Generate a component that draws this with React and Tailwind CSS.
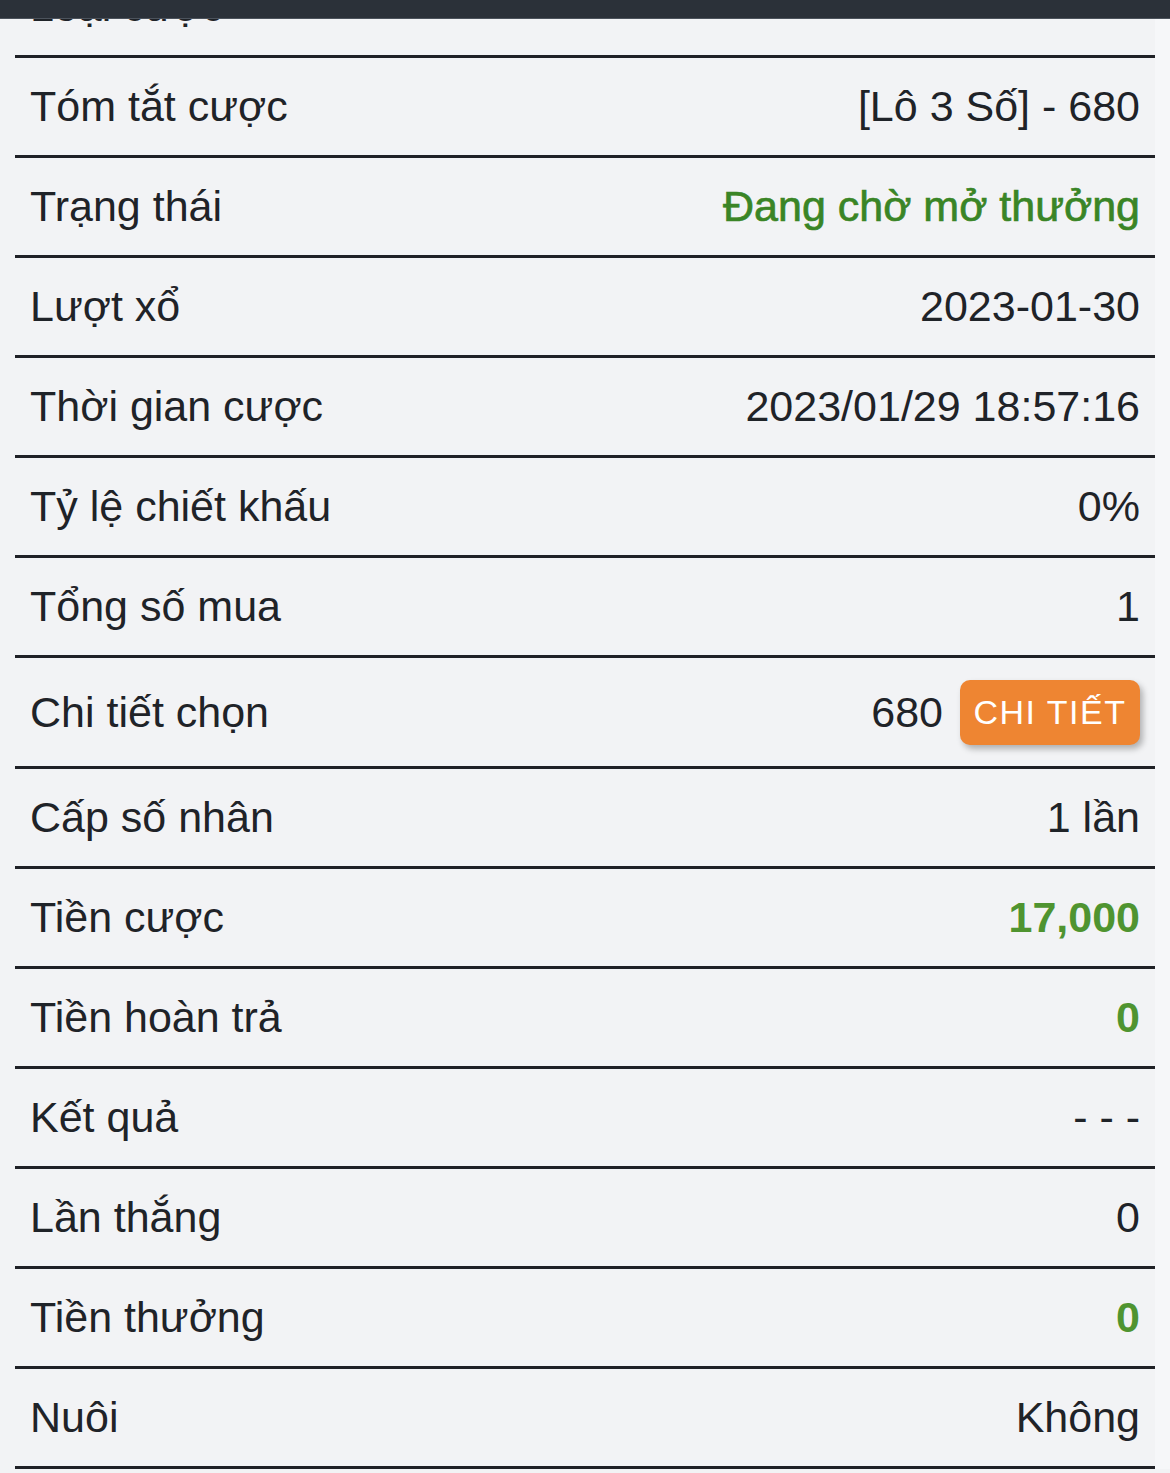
import React from 'react'

// Chi tiết cược - danh sách thông tin
const rows = [
  { label: 'Loại cược', value: '' },
  { label: 'Tóm tắt cược', value: '[Lô 3 Số] - 680' },
  { label: 'Trạng thái', value: 'Đang chờ mở thưởng', tone: 'status' },
  { label: 'Lượt xổ', value: '2023-01-30' },
  { label: 'Thời gian cược', value: '2023/01/29 18:57:16' },
  { label: 'Tỷ lệ chiết khấu', value: '0%' },
  { label: 'Tổng số mua', value: '1' },
  { label: 'Chi tiết chọn', value: '680', button: true },
  { label: 'Cấp số nhân', value: '1 lần' },
  { label: 'Tiền cược', value: '17,000', tone: 'money' },
  { label: 'Tiền hoàn trả', value: '0', tone: 'money' },
  { label: 'Kết quả', value: '- - -' },
  { label: 'Lần thắng', value: '0' },
  { label: 'Tiền thưởng', value: '0', tone: 'money' },
  { label: 'Nuôi', value: 'Không' },
]

const valueClass = (tone) => {
  if (tone === 'status') return 'text-[#3a8526] [-webkit-text-stroke:0.7px_#3a8526]'
  if (tone === 'money') return 'text-[#4f9430] font-bold'
  return 'text-[#1f2328]'
}

const Row = ({ row }) => (
  <div
    className={`flex items-center justify-between px-[15px] border-b-[3px] border-[#1f2126] ${
      row.button ? 'h-[111px]' : 'h-[100px]'
    }`}
  >
    <span className="text-[#1f2328]">{row.label}</span>
    {row.button ? (
      <div className="flex items-center gap-[17px]">
        <span className="text-[#1f2328]">{row.value}</span>
        <button className="w-[180px] h-[65px] rounded-[10px] bg-[#ee8532] text-white text-[34px] tracking-[1.5px] shadow-[3px_4px_6px_rgba(0,0,0,0.28)] flex items-center justify-center">
          CHI TIẾT
        </button>
      </div>
    ) : (
      <span className={valueClass(row.tone)}>{row.value}</span>
    )}
  </div>
)

export default function App() {
  return (
    <div
      className="relative h-[1473px] overflow-hidden bg-[#f2f3f5] text-[43px] leading-none"
      style={{ fontFamily: '"Liberation Sans", Arial, sans-serif' }}
    >
      {/* Thanh tiêu đề phía trên */}
      <div className="absolute top-0 left-0 right-0 z-10 h-[19px] bg-[#2b3139] border-b border-[#4c535c]" />

      <div className="flex">
        <div className="ml-[15px] w-[1140px] -mt-[42px]">
          {rows.map((row) => (
            <Row key={row.label} row={row} />
          ))}
        </div>
        <div className="flex-1 bg-[#f6f7f9]" />
      </div>
    </div>
  )
}
